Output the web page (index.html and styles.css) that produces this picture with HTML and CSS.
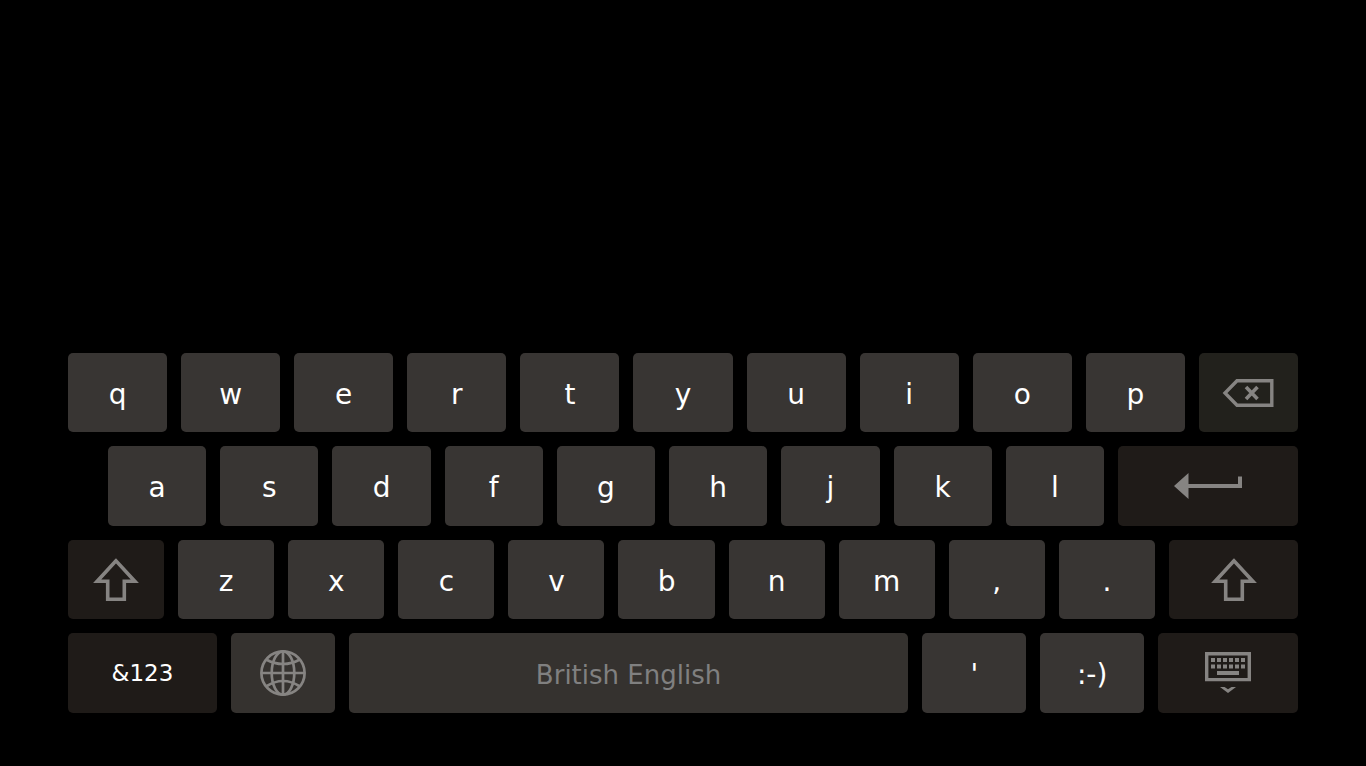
FILE: index.html
```html
<!DOCTYPE html>
<html lang="en-GB">
<head>
  <meta charset="UTF-8" />
  <meta name="viewport" content="width=device-width, initial-scale=1.0"/>
  <title>Virtual Keyboard</title>
  <link rel="stylesheet" href="styles.css">
</head>
<body>

  <div class="keyboard">
    <div class="row row-top">
      <button class="key">q</button>
      <button class="key">w</button>
      <button class="key">e</button>
      <button class="key">r</button>
      <button class="key">t</button>
      <button class="key">y</button>
      <button class="key">u</button>
      <button class="key">i</button>
      <button class="key">o</button>
      <button class="key">p</button>
      <button class="key icon backspace" aria-label="Backspace">
        <svg width="52" height="28" viewBox="0 0 52 28">
          <path d="M15 1.700H49.800V26.300H15L3 14Z" fill="none" stroke="currentColor" stroke-width="3.4"/>
          <path d="M24 8L35.500 20M35.500 8L24 20" fill="none" stroke="currentColor" stroke-width="3.6"/>
        </svg>
      </button>
    </div>

    <div class="row row-home">
      <button class="key">a</button>
      <button class="key">s</button>
      <button class="key">d</button>
      <button class="key">f</button>
      <button class="key">g</button>
      <button class="key">h</button>
      <button class="key">j</button>
      <button class="key">k</button>
      <button class="key">l</button>
      <button class="key icon dark enter" aria-label="Enter">
        <svg width="68" height="26" viewBox="0 0 68 26">
          <path d="M0 13L14.500 0V11H64V3.500H68V15H14.500V26Z" fill="currentColor"/>
        </svg>
      </button>
    </div>

    <div class="row row-bottom">
      <button class="key icon dark" aria-label="Shift">
        <svg width="46" height="44" viewBox="0 0 46 44">
          <path d="M23 2.800L4.200 23.200H14.700V41.200H31.300V23.200H41.800Z" fill="none" stroke="currentColor" stroke-width="3.6"/>
        </svg>
      </button>
      <button class="key">z</button>
      <button class="key">x</button>
      <button class="key">c</button>
      <button class="key">v</button>
      <button class="key">b</button>
      <button class="key">n</button>
      <button class="key">m</button>
      <button class="key">,</button>
      <button class="key">.</button>
      <button class="key icon dark shift-right" aria-label="Shift">
        <svg width="46" height="44" viewBox="0 0 46 44">
          <path d="M23 2.800L4.200 23.200H14.700V41.200H31.300V23.200H41.800Z" fill="none" stroke="currentColor" stroke-width="3.6"/>
        </svg>
      </button>
    </div>

    <div class="row row-space">
      <button class="key dark symbols">&amp;123</button>
      <button class="key icon language" aria-label="Change language">
        <svg width="46" height="46" viewBox="0 0 46 46">
          <g fill="none" stroke="currentColor" stroke-width="2.7">
            <circle cx="23" cy="23" r="21.600"/>
            <ellipse cx="23" cy="23" rx="11.300" ry="21.600"/>
            <path d="M23 1V45M1 23H45"/>
            <path d="M6 9.500Q23 18.500 40 9.500M6 36.500Q23 25.500 40 36.500"/>
          </g>
        </svg>
      </button>
      <button class="key space">British English</button>
      <button class="key">'</button>
      <button class="key">:-)</button>
      <button class="key icon dark hide" aria-label="Hide keyboard">
        <svg width="46" height="42" viewBox="0 0 46 42">
          <path d="M1.700 1.700H44.300V27.600H1.700Z" fill="none" stroke="currentColor" stroke-width="3.4"/>
          <path d="M6 8H40M6 14.500H40" fill="none" stroke="currentColor" stroke-width="4" stroke-dasharray="4 2"/>
          <path d="M12 19H34V23H12Z" fill="currentColor"/>
          <path d="M15 35H19.500L23 37.200L26.500 35H31L23 41Z" fill="currentColor"/>
        </svg>
      </button>
    </div>
  </div>

</body>
</html>
```
FILE: styles.css
```css
* { box-sizing: border-box; }
body {
  font-family: "DejaVu Sans", sans-serif;
  margin: 0;
  background: #000;
  display: flex;
  flex-direction: column;
  justify-content: flex-end;
  min-height: 100vh;
}

.keyboard {
  display: grid;
  grid-auto-rows: 1fr;
  gap: 14px;
  height: 47vh;
  margin: 0 68px 53px;
}
.row {
  display: flex;
  gap: 14px;
}
.row-home { padding-left: 40px; }

.key {
  flex: 96 1 0;
  min-width: 0;
  padding: 4px 0 0;
  border: none;
  border-radius: 5px;
  background: #383533;
  color: #fff;
  font-family: inherit;
  font-size: 28px;
  line-height: 32px;
  display: flex;
  align-items: center;
  justify-content: center;
  cursor: pointer;
}
.key svg {
  display: block;
  flex: none;
  color: #868482;
}
.key:active { background: #53504c; }

/* function keys */
.icon, .symbols { padding: 0; }
.dark { background: #1f1b18; }
.backspace { background: #22211c; }
.enter { flex-grow: 176; }
.shift-right { flex-grow: 129; }

/* bottom row */
.row-space .key { flex-grow: 104; }
.row-space .symbols {
  flex-grow: 149;
  font-size: 23px;
}
.row-space .language { background: #35322f; }
.row-space .space {
  flex-grow: 560;
  background: #35322f;
  color: #808080;
  font-size: 26px;
}
.row-space .hide { flex-grow: 140; }
```
